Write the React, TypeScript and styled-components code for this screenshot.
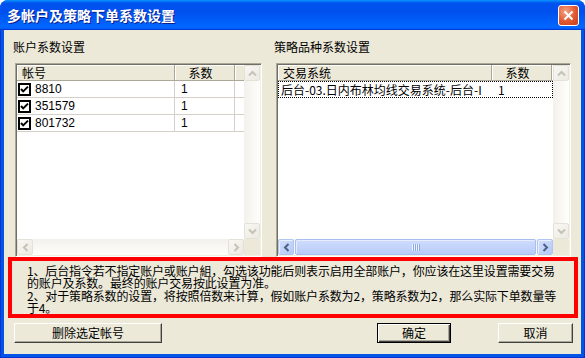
import styled, { createGlobalStyle, css } from 'styled-components'

const GlobalStyle = createGlobalStyle`
  html, body {
    margin: 0;
    padding: 0;
    background: #fff;
  }
  body {
    font-family: "Noto Sans CJK SC", "Liberation Sans", sans-serif;
    font-size: 12px;
    color: #000;
  }
`

const Window = styled.div`
  width: 585px;
  height: 358px;
  display: flex;
  flex-direction: column;
  background: #0055e5;
  border-radius: 8px 8px 0 0;
  overflow: hidden;
`

const TitleBar = styled.div`
  flex: none;
  height: 30px;
  display: flex;
  align-items: center;
  padding: 0 6px 0 7px;
  background: linear-gradient(
    to bottom,
    #0997ff 0,
    #0053ee 10%,
    #0050ee 40%,
    #0066ff 86%,
    #0066ff 92%,
    #005bff 95%,
    #003dd7 97%,
    #003dd7 100%
  );
`

const Title = styled.span`
  flex: 1;
  color: #fff;
  font-size: 14px;
  font-weight: 700;
  line-height: 16px;
  white-space: nowrap;
  text-shadow: 1px 1px #0a1e8c;
`

const CloseButton = styled.div`
  width: 21px;
  height: 21px;
  box-sizing: border-box;
  border: 1px solid #fff;
  border-radius: 3px;
  background: radial-gradient(circle at 35% 30%, #f3a387 0, #e2582f 55%, #c4401c 100%);
  display: grid;
  place-items: center;
`

const Frame = styled.div`
  flex: 1;
  display: flex;
  padding: 0 4px 4px;
  background: #0055e5;
  box-shadow: inset 1px 0 #0831d9, inset -1px 0 #0831d9, inset 0 -1px #0831d9;
`

const Client = styled.div`
  flex: 1;
  display: flex;
  flex-direction: column;
  background: #ece9d8;
  padding: 10px 3px 11px 4px;
`

const Panels = styled.div`
  display: grid;
  grid-template-columns: 249px 297px;
  column-gap: 12px;
  padding-left: 5px;
`

const Panel = styled.div`
  display: flex;
  flex-direction: column;
`

const GroupLabel = styled.div`
  height: 14px;
  line-height: 14px;
  margin-bottom: 9px;
  white-space: nowrap;
`

const ListBox = styled.div`
  margin-left: 2px;
  height: 194px;
  box-sizing: border-box;
  border: 1px solid;
  border-color: #aca899 #fff #fff #aca899;
  box-shadow: inset 1px 1px #716f64, inset -1px -1px #f1efe2;
  padding: 1px;
  background: #fff;
  display: grid;
  grid-template-columns: minmax(0, 1fr) 16px;
  grid-template-rows: minmax(0, 1fr) 16px;
`

const ListContent = styled.div`
  display: flex;
  flex-direction: column;
  overflow: hidden;
  min-width: 0;
`

const HeaderRow = styled.div<{ $cols: string }>`
  flex: none;
  display: grid;
  grid-template-columns: ${(p) => p.$cols};
  height: 16px;
`

const HeaderCell = styled.div<{ $center?: boolean }>`
  box-sizing: border-box;
  height: 16px;
  line-height: 15px;
  padding: ${(p) => (p.$center ? '0 8px 0 0' : '0 5px')};
  background: #ece9d8;
  border-right: 1px solid #aca899;
  border-bottom: 1px solid #aca899;
  box-shadow: inset 1px 1px #fff;
  text-align: ${(p) => (p.$center ? 'center' : 'left')};
  white-space: nowrap;
  overflow: hidden;
`

const Row = styled.div<{ $cols: string; $grid?: boolean; $focused?: boolean }>`
  display: grid;
  grid-template-columns: ${(p) => p.$cols};
  height: 17px;
  box-sizing: border-box;
  ${(p) =>
    p.$grid &&
    css`
      border-bottom: 1px solid #d4d0c8;
    `}
  ${(p) =>
    p.$focused &&
    css`
      outline: 1px dotted #000;
      outline-offset: -1px;
    `}
`

const Cell = styled.div<{ $grid?: boolean; $pad?: number; $latin?: boolean }>`
  box-sizing: border-box;
  display: flex;
  align-items: center;
  gap: 4px;
  padding-left: ${(p) => p.$pad ?? 6}px;
  white-space: nowrap;
  overflow: hidden;
  line-height: 16px;
  ${(p) =>
    p.$latin &&
    css`
      font-family: "Liberation Sans", sans-serif;
      font-size: 12px;
    `}
  ${(p) =>
    p.$grid &&
    css`
      border-right: 1px solid #d4d0c8;
    `}
`

const VScroll = styled.div`
  display: flex;
  flex-direction: column;
  justify-content: space-between;
  background: linear-gradient(to right, #f3f1ec, #fefefb);
`

const HScroll = styled.div`
  display: flex;
  justify-content: space-between;
  background: linear-gradient(to bottom, #f3f1ec, #fefefb);
`

const Corner = styled.div`
  background: #ece9d8;
`

const ArrowButton = styled.div<{ $active?: boolean }>`
  flex: none;
  width: 16px;
  height: 16px;
  box-sizing: border-box;
  border-radius: 2px;
  display: grid;
  place-items: center;
  ${(p) =>
    p.$active
      ? css`
          background: linear-gradient(135deg, #d2defc, #b6c9f6);
          border: 1px solid #b0c5f4;
          box-shadow: inset 1px 1px #e8effe;
        `
      : css`
          background: linear-gradient(135deg, #f8f7f3, #eceae1);
          border: 1px solid #e4e2d8;
        `}
`

const ChevronSvg = styled.svg<{ $rot: number }>`
  display: block;
  transform: rotate(${(p) => p.$rot}deg);
`

const Thumb = styled.div`
  flex: 1;
  margin: 0 1px;
  box-sizing: border-box;
  border: 1px solid #a7bef3;
  border-radius: 2px;
  background: linear-gradient(to bottom, #cfdcfd, #b8cbf8);
  box-shadow: inset 1px 1px #e5edfe;
  display: grid;
  place-items: center;
`

const Note = styled.div`
  height: 61px;
  box-sizing: border-box;
  border: 4px solid #ff0000;
  padding: 4px 0 0 15px;
  overflow: hidden;
`

const NoteLine = styled.div`
  height: 12.25px;
  line-height: 12.25px;
  letter-spacing: -0.15px;
  white-space: nowrap;
`

const ButtonRow = styled.div`
  display: flex;
  margin-top: 5px;
  padding: 0 5px 0 6px;
`

const Button = styled.div<{ $width: number; $default?: boolean; $gap?: number }>`
  width: ${(p) => p.$width}px;
  height: 20px;
  box-sizing: border-box;
  display: grid;
  place-items: center;
  line-height: 16px;
  background: #ece9d8;
  margin-left: ${(p) => (p.$gap === undefined ? '0' : p.$gap < 0 ? 'auto' : `${p.$gap}px`)};
  ${(p) =>
    p.$default
      ? css`
          border: 1px solid #000;
          box-shadow: inset 1px 1px #fff, inset -1px -1px #404040, inset -2px -2px #aca899;
        `
      : css`
          border: 1px solid;
          border-color: #fff #404040 #404040 #fff;
          box-shadow: inset -1px -1px #aca899;
        `}
`

type Dir = 'up' | 'right' | 'down' | 'left'
const ROT: Record<Dir, number> = { up: 0, right: 90, down: 180, left: 270 }

const Chevron = ({ dir, active }: { dir: Dir; active?: boolean }) => (
  <ChevronSvg $rot={ROT[dir]} width="9" height="9" viewBox="0 0 9 9">
    <path
      d="M1 6.5 L4.5 3 L8 6.5"
      stroke={active ? '#4d6185' : '#c5c3b6'}
      strokeWidth="2"
      fill="none"
    />
  </ChevronSvg>
)

const CheckBox = () => (
  <svg width="13" height="13" viewBox="0 0 13 13">
    <rect x="1" y="1" width="11" height="11" fill="#fff" stroke="#000" strokeWidth="2" />
    <path d="M3 6 L5.2 8.4 L10 3.6" stroke="#000" strokeWidth="2" fill="none" />
  </svg>
)

const Grip = () => (
  <svg width="8" height="7" viewBox="0 0 8 7">
    {[0, 2, 4, 6].map((x) => (
      <g key={x}>
        <rect x={x} y="0" width="1" height="7" fill="#eef3fe" />
        <rect x={x + 1} y="0" width="1" height="7" fill="#8aa8ec" />
      </g>
    ))}
  </svg>
)

const accounts = [
  { id: '8810', ratio: '1' },
  { id: '351579', ratio: '1' },
  { id: '801732', ratio: '1' },
]

const noteLines = [
  '1、后台指令若不指定账户或账户組，勾选该功能后则表示启用全部账户，你应该在这里设置需要交易',
  '的账户及系数。最终的账户交易按此设置为准。',
  '2、对于策略系数的设置，将按照倍数来计算，假如账户系数为2，策略系数为2，那么实际下单数量等',
  '于4。',
]

const LEFT_COLS = '158px 60px 1fr'
const RIGHT_COLS = '214px 60px 1fr'

export default function App() {
  return (
    <>
      <GlobalStyle />
      <Window>
        <TitleBar>
          <Title>多帐户及策略下单系数设置</Title>
          <CloseButton>
            <svg width="11" height="11" viewBox="0 0 11 11">
              <path d="M1.5 1.5 L9.5 9.5 M9.5 1.5 L1.5 9.5" stroke="#fff" strokeWidth="2" />
            </svg>
          </CloseButton>
        </TitleBar>
        <Frame>
          <Client>
            <Panels>
              <Panel>
                <GroupLabel>账户系数设置</GroupLabel>
                <ListBox>
                  <ListContent>
                    <HeaderRow $cols={LEFT_COLS}>
                      <HeaderCell>帐号</HeaderCell>
                      <HeaderCell $center>系数</HeaderCell>
                      <HeaderCell />
                    </HeaderRow>
                    {accounts.map((a) => (
                      <Row key={a.id} $cols={LEFT_COLS} $grid>
                        <Cell $grid $pad={1} $latin>
                          <CheckBox />
                          {a.id}
                        </Cell>
                        <Cell $grid $latin>
                          {a.ratio}
                        </Cell>
                        <Cell />
                      </Row>
                    ))}
                  </ListContent>
                  <VScroll>
                    <ArrowButton>
                      <Chevron dir="up" />
                    </ArrowButton>
                    <ArrowButton>
                      <Chevron dir="down" />
                    </ArrowButton>
                  </VScroll>
                  <HScroll>
                    <ArrowButton>
                      <Chevron dir="left" />
                    </ArrowButton>
                    <ArrowButton>
                      <Chevron dir="right" />
                    </ArrowButton>
                  </HScroll>
                  <Corner />
                </ListBox>
              </Panel>
              <Panel>
                <GroupLabel>策略品种系数设置</GroupLabel>
                <ListBox>
                  <ListContent>
                    <HeaderRow $cols={RIGHT_COLS}>
                      <HeaderCell>交易系统</HeaderCell>
                      <HeaderCell $center>系数</HeaderCell>
                      <HeaderCell />
                    </HeaderRow>
                    <Row $cols={RIGHT_COLS} $focused>
                      <Cell $pad={3}>后台-03.日内布林均线交易系统-后台-I</Cell>
                      <Cell>1</Cell>
                      <Cell />
                    </Row>
                  </ListContent>
                  <VScroll>
                    <ArrowButton>
                      <Chevron dir="up" />
                    </ArrowButton>
                    <ArrowButton>
                      <Chevron dir="down" />
                    </ArrowButton>
                  </VScroll>
                  <HScroll>
                    <ArrowButton $active>
                      <Chevron dir="left" active />
                    </ArrowButton>
                    <Thumb>
                      <Grip />
                    </Thumb>
                    <ArrowButton $active>
                      <Chevron dir="right" active />
                    </ArrowButton>
                  </HScroll>
                  <Corner />
                </ListBox>
              </Panel>
            </Panels>
            <Note>
              {noteLines.map((line) => (
                <NoteLine key={line}>{line}</NoteLine>
              ))}
            </Note>
            <ButtonRow>
              <Button $width={148}>删除选定帐号</Button>
              <Button $width={74} $default $gap={-1}>
                确定
              </Button>
              <Button $width={75} $gap={47}>
                取消
              </Button>
            </ButtonRow>
          </Client>
        </Frame>
      </Window>
    </>
  )
}
